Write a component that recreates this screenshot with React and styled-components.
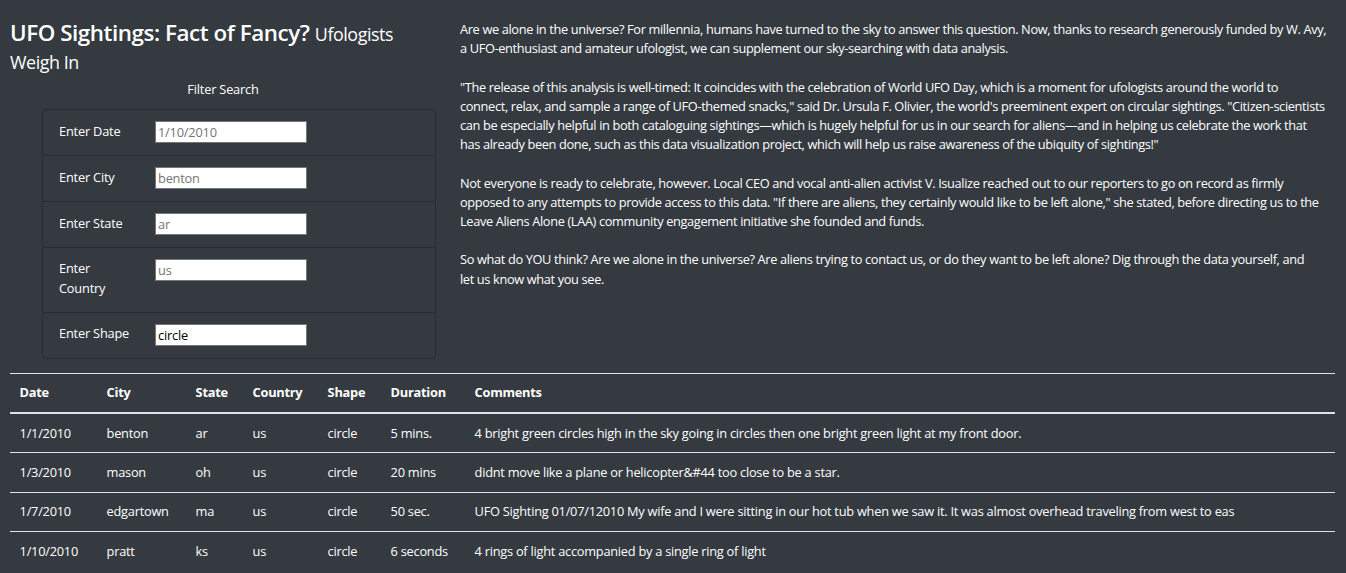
import React from "react";
import styled, { createGlobalStyle } from "styled-components";

const GlobalStyle = createGlobalStyle`
  html,
  body {
    margin: 0;
    padding: 0;
    background: #343a40;
  }
  body {
    font-family: "Open Sans", "Noto Sans", sans-serif;
    font-size: 12.8px;
    line-height: 19.2px;
    color: #ffffff;
  }
  * {
    box-sizing: border-box;
  }
`;

const Page = styled.div`
  /* 화면 */
  min-height: 573px;
  padding: 20px 11px 0 10px;
  background: #343a40;
`;

const Top = styled.div`
  display: grid;
  grid-template-columns: 426px 1fr;
  column-gap: 24px;
`;

const LeftCol = styled.div`
  display: flex;
  flex-direction: column;
`;

const Title = styled.h3`
  margin: 0 0 4.4px;
  font-size: 22.4px;
  line-height: 26.9px;
  font-weight: 600;
  letter-spacing: -0.45px;
`;

const Small = styled.small`
  font-size: 17.9px;
  font-weight: 400;
  letter-spacing: -0.45px;
`;

const FilterHead = styled.div`
  text-align: center;
  margin-bottom: 10px;
  letter-spacing: -0.2px;
`;

const FilterList = styled.ul`
  list-style: none;
  margin: 0 0 0 32px;
  padding: 0;
  border: 1px solid rgba(0, 0, 0, 0.22);
  border-radius: 3.2px;
`;

const FilterItem = styled.li`
  display: flex;
  align-items: flex-start;
  padding: 9.6px 16px;
  & + & {
    border-top: 1px solid rgba(0, 0, 0, 0.22);
  }
`;

const Label = styled.label`
  width: 78px;
  margin-right: 18px;
  padding-top: 2px;
  margin-bottom: 4.4px;
  letter-spacing: -0.2px;
`;

const Input = styled.input`
  width: 152px;
  height: 22px;
  margin-top: 1.4px;
  padding: 0 2px;
  border: 1px solid #767676;
  border-radius: 0;
  background: #ffffff;
  font-family: "Open Sans", "Noto Sans", sans-serif;
  font-size: 12.8px;
  color: #000000;
  letter-spacing: -0.2px;
  &::placeholder {
    color: #757575;
  }
`;

const Article = styled.div`
  letter-spacing: -0.36px;
  p {
    margin: 0 0 19.2px;
  }
`;

const Table = styled.table`
  /* 크기 */
  width: 100%;
  margin-top: 14px;
  border-collapse: collapse;
  table-layout: fixed;
  border-top: 1px solid #dee2e6;
  letter-spacing: -0.25px;

  th,
  td {
    padding: 9.6px;
    text-align: left;
    vertical-align: top;
    white-space: nowrap;
    overflow: hidden;
  }
  th {
    font-weight: 700;
    border-bottom: 2px solid #dee2e6;
  }
  tbody tr + tr td {
    border-top: 1px solid #dee2e6;
  }
`;

const filters = [
  { id: "datetime", label: "Enter Date", placeholder: "1/10/2010" },
  { id: "city", label: "Enter City", placeholder: "benton" },
  { id: "state", label: "Enter State", placeholder: "ar" },
  { id: "country", label: "Enter Country", placeholder: "us" },
  { id: "shape", label: "Enter Shape", value: "circle" },
];

const columns = [
  ["Date", 87],
  ["City", 89],
  ["State", 57],
  ["Country", 75],
  ["Shape", 63],
  ["Duration", 84],
  ["Comments", null],
];

const rows = [
  ["1/1/2010", "benton", "ar", "us", "circle", "5 mins.", "4 bright green circles high in the sky going in circles then one bright green light at my front door."],
  ["1/3/2010", "mason", "oh", "us", "circle", "20 mins", "didnt move like a plane or helicopter&#44 too close to be a star."],
  ["1/7/2010", "edgartown", "ma", "us", "circle", "50 sec.", "UFO Sighting 01/07/12010 My wife and I were sitting in our hot tub when we saw it. It was almost overhead traveling from west to eas"],
  ["1/10/2010", "pratt", "ks", "us", "circle", "6 seconds", "4 rings of light accompanied by a single ring of light"],
];

export default function App() {
  return (
    <Page>
      <GlobalStyle />
      <Top>
        <LeftCol>
          <Title>
            UFO Sightings: Fact of Fancy? <Small>Ufologists Weigh In</Small>
          </Title>
          <FilterHead>Filter Search</FilterHead>
          <FilterList>
            {filters.map((f) => (
              <FilterItem key={f.id}>
                <Label htmlFor={f.id}>{f.label}</Label>
                <Input
                  id={f.id}
                  type="text"
                  placeholder={f.placeholder}
                  defaultValue={f.value}
                />
              </FilterItem>
            ))}
          </FilterList>
        </LeftCol>
        <Article>
          <p>
            Are we alone in the universe? For millennia, humans have turned to the sky to answer this question. Now, thanks to research generously funded by W. Avy,
            <br />
            a UFO-enthusiast and amateur ufologist, we can supplement our sky-searching with data analysis.
          </p>
          <p>
            "The release of this analysis is well-timed: It coincides with the celebration of World UFO Day, which is a moment for ufologists around the world to
            <br />
            connect, relax, and sample a range of UFO-themed snacks," said Dr. Ursula F. Olivier, the world's preeminent expert on circular sightings. "Citizen-scientists
            <br />
            can be especially helpful in both cataloguing sightings—which is hugely helpful for us in our search for aliens—and in helping us celebrate the work that
            <br />
            has already been done, such as this data visualization project, which will help us raise awareness of the ubiquity of sightings!"
          </p>
          <p>
            Not everyone is ready to celebrate, however. Local CEO and vocal anti-alien activist V. Isualize reached out to our reporters to go on record as firmly
            <br />
            opposed to any attempts to provide access to this data. "If there are aliens, they certainly would like to be left alone," she stated, before directing us to the
            <br />
            Leave Aliens Alone (LAA) community engagement initiative she founded and funds.
          </p>
          <p>
            So what do YOU think? Are we alone in the universe? Are aliens trying to contact us, or do they want to be left alone? Dig through the data yourself, and
            <br />
            let us know what you see.
          </p>
        </Article>
      </Top>
      <Table>
        <colgroup>
          {columns.map(([name, w]) => (
            <col key={name} style={w ? { width: w } : undefined} />
          ))}
        </colgroup>
        <thead>
          <tr>
            {columns.map(([name]) => (
              <th key={name}>{name}</th>
            ))}
          </tr>
        </thead>
        <tbody>
          {rows.map((r) => (
            <tr key={r[0]}>
              {r.map((c, i) => (
                <td key={i}>{c}</td>
              ))}
            </tr>
          ))}
        </tbody>
      </Table>
    </Page>
  );
}
